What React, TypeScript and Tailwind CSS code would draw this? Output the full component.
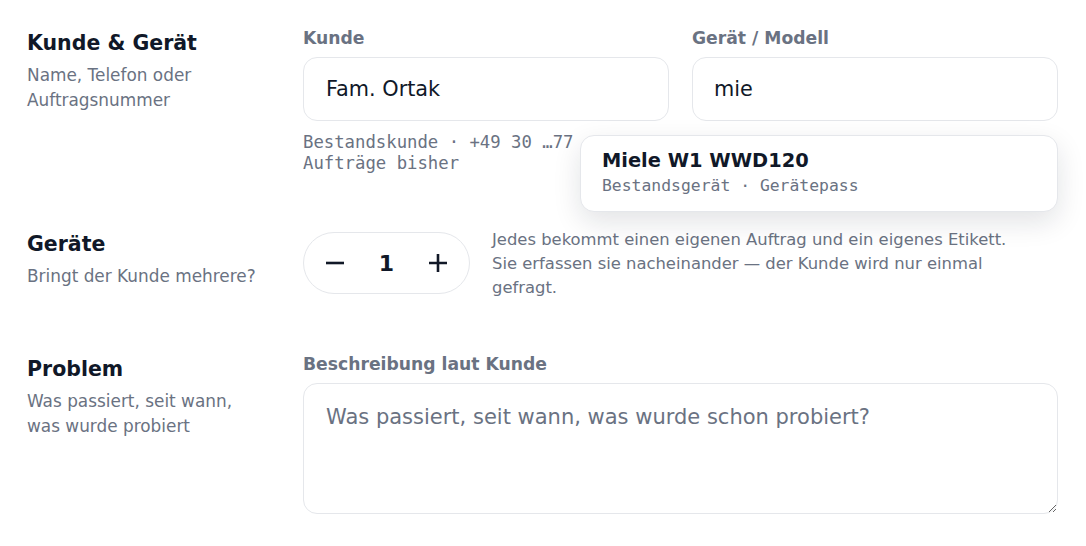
import { useState } from 'react';

const sans = { fontFamily: '"DejaVu Sans", "Noto Sans", sans-serif' };
const mono = { fontFamily: '"DejaVu Sans Mono", "Liberation Mono", monospace' };

function SectionHead({ title, children }: { title: string; children: React.ReactNode }) {
  return (
    <div className="pt-[3px]">
      <h2 className="text-[20.5px] leading-[28px] font-bold text-gray-900">{title}</h2>
      <p className="mt-1.5 text-[16.9px] leading-[24.5px] text-gray-500">{children}</p>
    </div>
  );
}

function FieldLabel({ children }: { children: React.ReactNode }) {
  return <div className="text-[17.2px] leading-6 font-bold text-gray-500">{children}</div>;
}

function MinusIcon() {
  return (
    <svg width="18" height="18" viewBox="0 0 18 18" fill="none">
      <path d="M1 9h16" stroke="#111827" strokeWidth="2.6" strokeLinecap="square" />
    </svg>
  );
}

function PlusIcon() {
  return (
    <svg width="18" height="18" viewBox="0 0 18 18" fill="none">
      <path d="M1 9h16M9 1v16" stroke="#111827" strokeWidth="2.6" strokeLinecap="square" />
    </svg>
  );
}

export default function App() {
  const [count, setCount] = useState(1);
  const [device, setDevice] = useState('mie');
  const [customer, setCustomer] = useState('Fam. Ortak');

  return (
    <div className="min-h-screen bg-white pl-[27px] pr-[28px] pt-[26px]" style={sans}>
      {/* Kunde & Gerät */}
      <div className="grid grid-cols-[276px_1fr]">
        <SectionHead title="Kunde & Gerät">
          Name, Telefon oder
          <br />
          Auftragsnummer
        </SectionHead>
        <div className="grid grid-cols-2 gap-[23px]">
          <div>
            <FieldLabel>Kunde</FieldLabel>
            <input
              value={customer}
              onChange={(e) => setCustomer(e.target.value)}
              className="mt-[7px] w-full h-16 rounded-[14px] border border-gray-200 px-[22px] text-[20.8px] text-gray-900 outline-none"
            />
            <p className="mt-[11px] text-[17.3px] leading-[21px] text-gray-500" style={mono}>
              Bestandskunde · +49 30 …77
              <br />
              Aufträge bisher
            </p>
          </div>
          <div className="relative">
            <FieldLabel>Gerät / Modell</FieldLabel>
            <input
              value={device}
              onChange={(e) => setDevice(e.target.value)}
              className="mt-[7px] w-full h-16 rounded-[14px] border border-gray-200 px-[21px] text-[20.8px] text-gray-900 outline-none"
            />
            {/* Suggestion dropdown */}
            <div className="absolute left-[-112px] right-0 top-[109px] z-10 rounded-[14px] border border-gray-200 bg-white px-[21px] pt-[11px] pb-[14px] shadow-[0_10px_28px_rgba(17,24,39,0.12)]">
              <div className="text-[19.4px] leading-[28px] font-bold text-gray-900">Miele W1 WWD120</div>
              <div className="text-[16.4px] leading-[22px] text-gray-500" style={mono}>
                Bestandsgerät · Gerätepass
              </div>
            </div>
          </div>
        </div>
      </div>

      {/* Geräte */}
      <div className="mt-[53px] grid grid-cols-[276px_1fr]">
        <div className="pt-[3px]">
          <h2 className="text-[20.5px] leading-[28px] font-bold text-gray-900">Geräte</h2>
          <p className="mt-1.5 text-[16.9px] leading-6 text-gray-500">Bringt der Kunde mehrere?</p>
        </div>
        <div className="flex items-start gap-[22px] pt-px">
          <div className="mt-1 flex h-[62px] w-[167px] shrink-0 items-center justify-between rounded-full border border-gray-200 px-[22px]">
            <button onClick={() => setCount((c) => Math.max(1, c - 1))} aria-label="Weniger">
              <MinusIcon />
            </button>
            <span className="text-[22px] font-bold text-gray-900">{count}</span>
            <button onClick={() => setCount((c) => c + 1)} aria-label="Mehr">
              <PlusIcon />
            </button>
          </div>
          <p className="text-[16.4px] leading-6 text-gray-500">
            Jedes bekommt einen eigenen Auftrag und ein eigenes Etikett.
            <br />
            Sie erfassen sie nacheinander — der Kunde wird nur einmal
            <br />
            gefragt.
          </p>
        </div>
      </div>

      {/* Problem */}
      <div className="mt-[52px] grid grid-cols-[276px_1fr]">
        <SectionHead title="Problem">
          Was passiert, seit wann,
          <br />
          was wurde probiert
        </SectionHead>
        <div>
          <FieldLabel>Beschreibung laut Kunde</FieldLabel>
          <textarea
            placeholder="Was passiert, seit wann, was wurde schon probiert?"
            className="mt-[7px] block h-[131px] w-full resize-y rounded-[14px] border border-gray-200 px-[22px] pt-[19px] text-[21px] leading-[28px] text-gray-900 outline-none placeholder:text-gray-500"
          />
        </div>
      </div>
    </div>
  );
}
